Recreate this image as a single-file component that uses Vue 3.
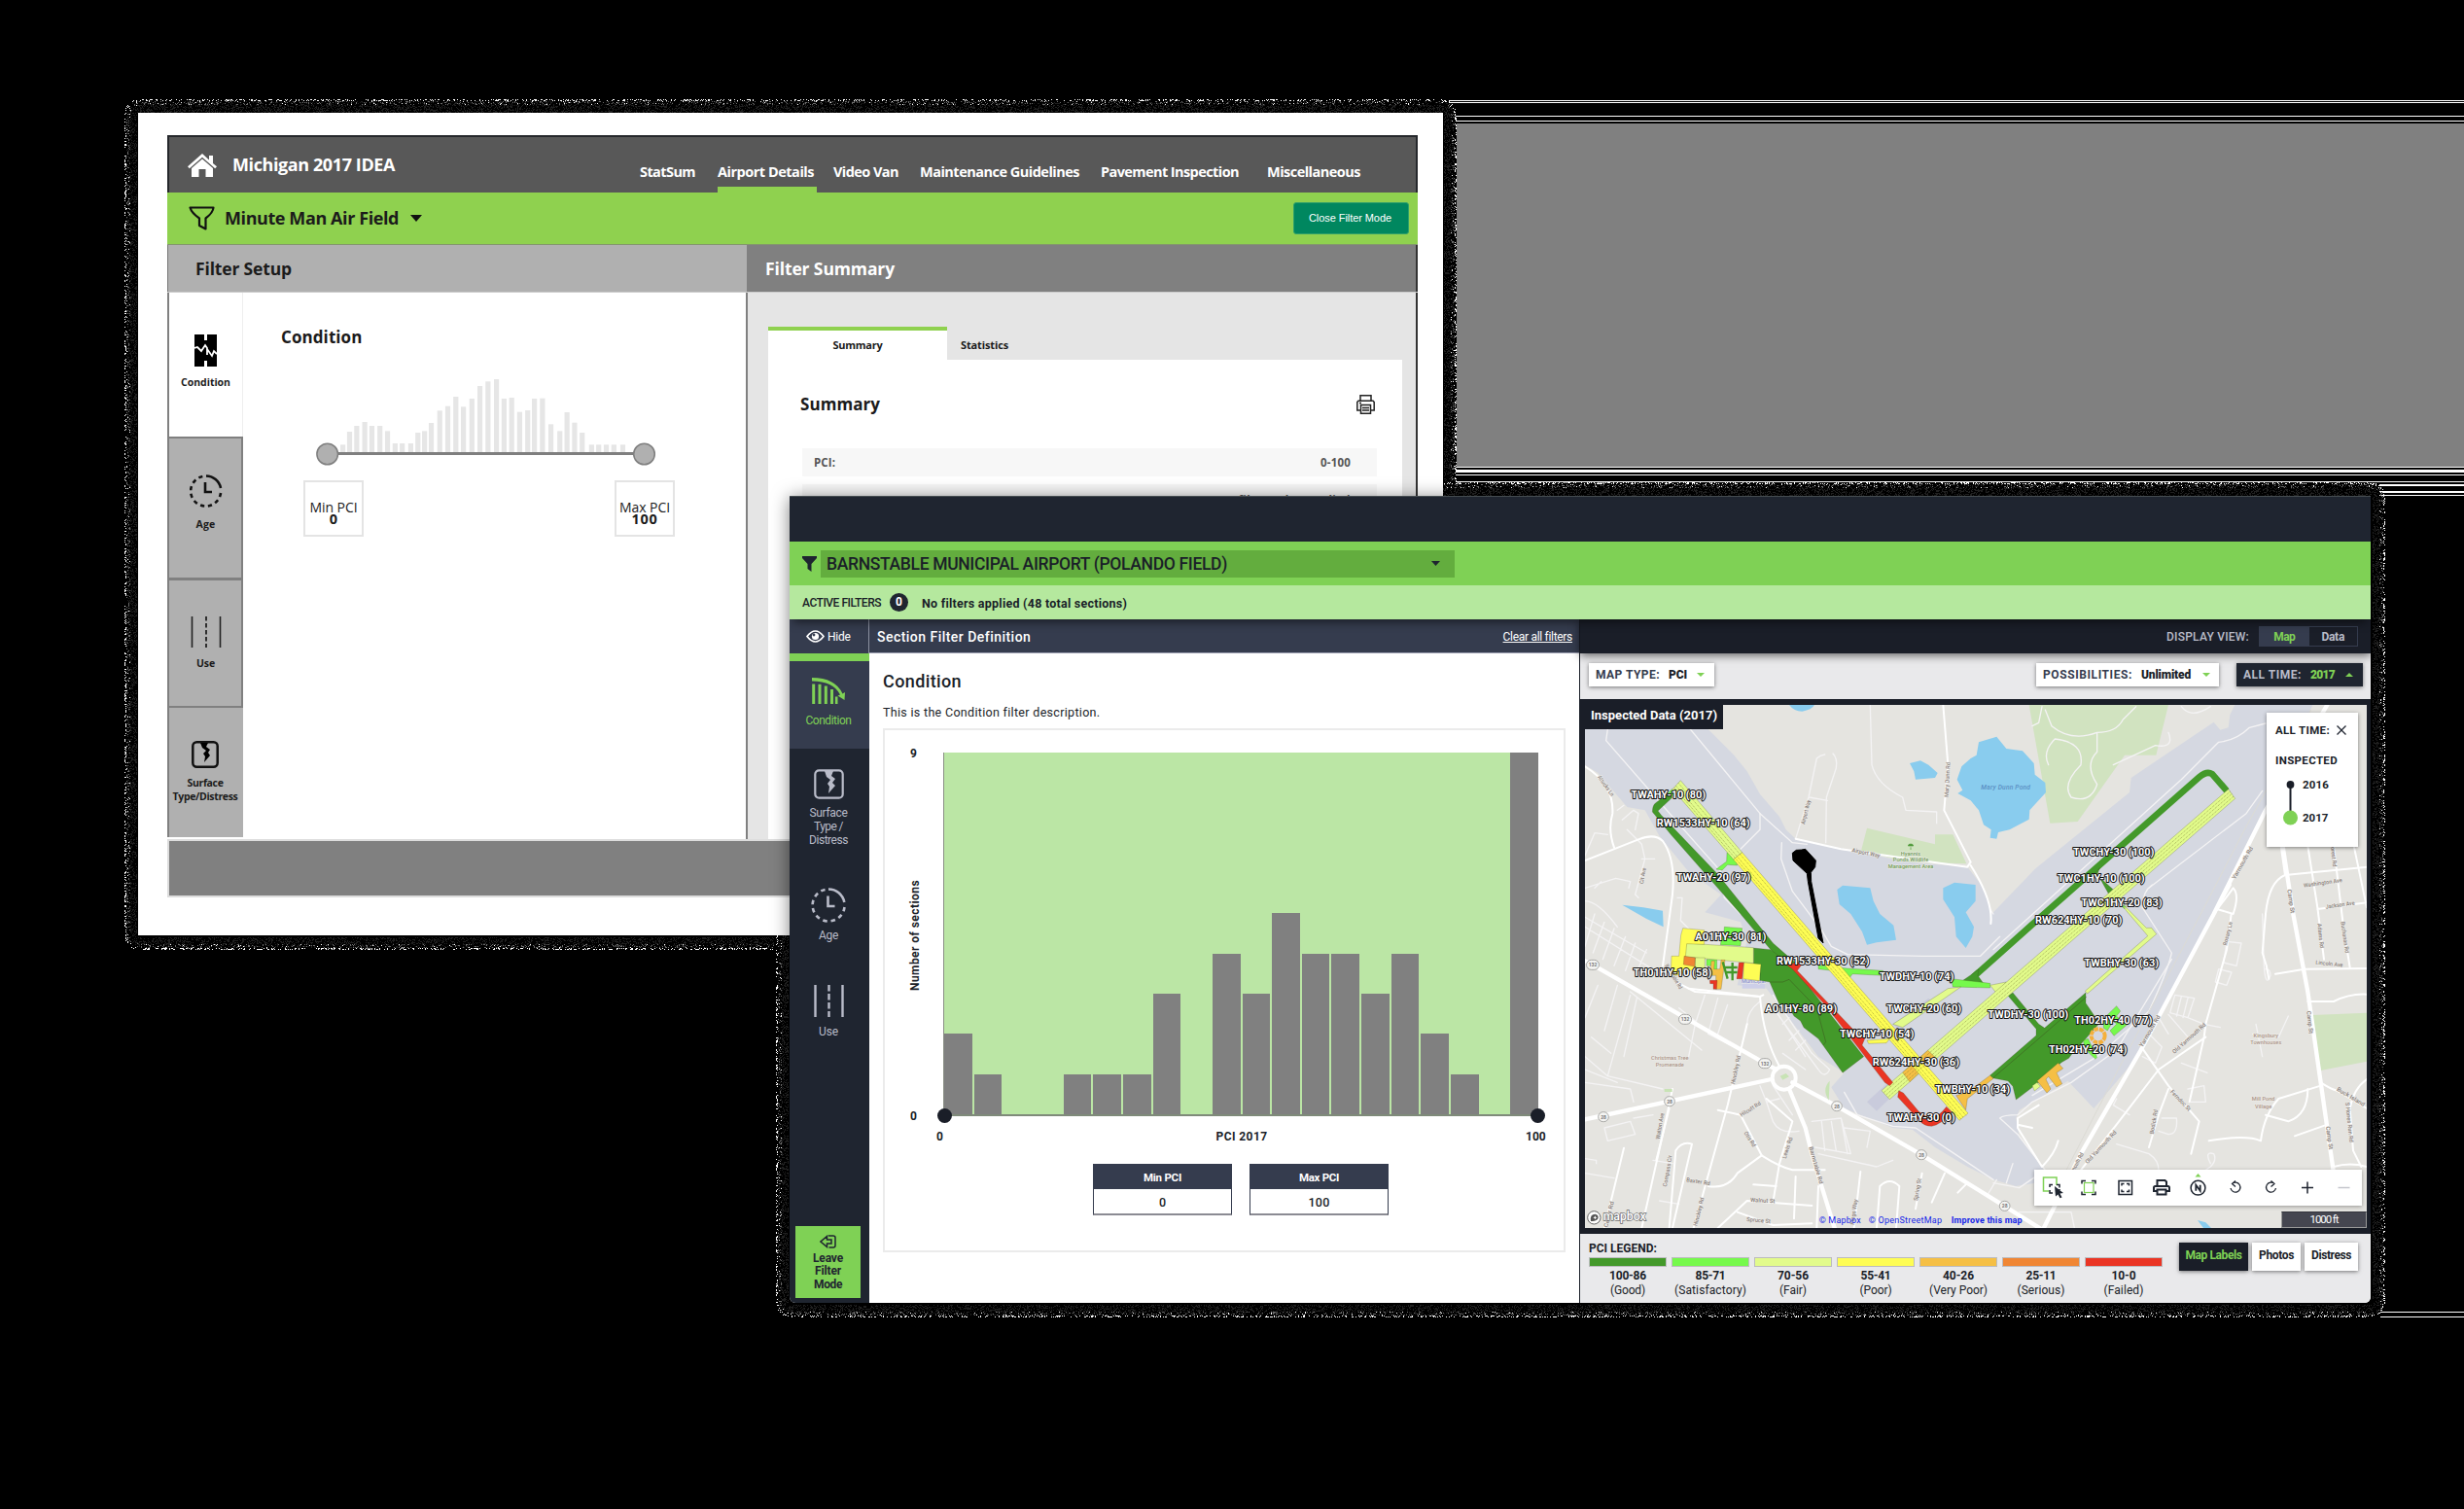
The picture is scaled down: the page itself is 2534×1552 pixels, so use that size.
<script setup>
// Spreads a text's letters so that it fills the given length in pixels.
const vFit = {
  mounted(el, { value, modifiers }) {
    const side = modifiers.tall ? 'height' : 'width'
    const n = el.textContent.trim().length
    el.style.letterSpacing = '0px'
    const natural = el.getBoundingClientRect()[side]
    el.style.letterSpacing = ((value - natural) / n).toFixed(3) + 'px'
  },
}

// Speckled shadow edge round each window
let seed = 7
function rnd() {
  seed = (seed * 1103515245 + 12345) % 2147483648
  return seed / 2147483648
}
const specks = ['', '', '']
function ring(l, t, r, b, size, skip) {
  const radius = 14
  for (let y = t; y < b; y++) {
    for (let x = l; x < r; x++) {
      if (x === l + size && y > t + size && y < b - size) x = r - size
      const dx = Math.max(l + radius - x, x - (r - 1 - radius), 0)
      const dy = Math.max(t + radius - y, y - (b - 1 - radius), 0)
      const depth = dx && dy ? radius - Math.hypot(dx, dy) : radius - Math.max(dx, dy)
      if (depth < 0 || depth > size || skip(x, y)) continue
      const k = rnd()
      const q = rnd()
      if (depth < 2) {
        if (k < 0.28) specks[0] += `M${x} ${y}h1v1h-1z`
      } else if (depth < 6) {
        if (k < 0.3) specks[q < 0.08 ? 0 : q < 0.5 ? 1 : 2] += `M${x} ${y}h1v1h-1z`
      } else if (k < 0.32) specks[2] += `M${x} ${y}h1v1h-1z`
    }
  }
}
const inFront = (x, y) => x >= 796 && y >= 496
ring(128, 102, 1498, 977, 13, inFront)
ring(798, 496, 2453, 1355, 13, (x, y) => x < 1484 && y < 962)

const nav = [
  { t: 'StatSum', w: 57, m: 0 },
  { t: 'Airport Details', w: 99, m: 23, on: true },
  { t: 'Video Van', w: 67, m: 17 },
  { t: 'Maintenance Guidelines', w: 164, m: 22 },
  { t: 'Pavement Inspection', w: 142, m: 22 },
  { t: 'Miscellaneous', w: 96, m: 29 },
]
const miniBars = [
  [501, 1102], [516, 1062], [532, 1044], [550, 1032], [566, 1044], [584, 1044], [601, 1060], [618, 1098],
  [634, 1098], [653, 1098], [669, 1065], [684, 1060], [699, 1035], [718, 997], [736, 983], [754, 954],
  [771, 985], [790, 960], [808, 921], [826, 907], [845, 900], [862, 960], [879, 957], [897, 1001],
  [915, 996], [930, 960], [948, 959], [967, 1039], [987, 1060], [1003, 1002], [1020, 1034], [1037, 1065],
  [1058, 1102], [1074, 1102], [1091, 1102], [1108, 1102], [1128, 1102],
].map(([x, y]) => ({ x: x / 2.178 - 130, y: y / 3 - 211, h: (1126 - y) / 3 }))

const counts = [2, 1, 0, 0, 1, 1, 1, 3, 0, 4, 3, 5, 4, 4, 3, 4, 2, 1, 0, 9]

const legend = [
  { r: '100-86', n: '(Good)', c: '#43992a', rw: 38, nw: 36 },
  { r: '85-71', n: '(Satisfactory)', c: '#76f94c', rw: 31, nw: 74 },
  { r: '70-56', n: '(Fair)', c: '#e2fb8b', rw: 32, nw: 28 },
  { r: '55-41', n: '(Poor)', c: '#fefd54', rw: 31, nw: 33 },
  { r: '40-26', n: '(Very Poor)', c: '#f5bf45', rw: 32, nw: 60 },
  { r: '25-11', n: '(Serious)', c: '#f08634', rw: 31, nw: 49 },
  { r: '10-0', n: '(Failed)', c: '#ea3524', rw: 25, nw: 41 },
]

const sections = [
  { t: 'TWAHY-10 (80)', x: 202, y: 603, w: 230 },
  { t: 'RW1533HY-10 (64)', x: 281, y: 690, w: 288 },
  { t: 'TWAHY-20 (97)', x: 342, y: 857, w: 229 },
  { t: 'TWCHY-30 (100)', x: 1566, y: 779, w: 250 },
  { t: 'TWC1HY-10 (100)', x: 1518, y: 862, w: 269 },
  { t: 'TWC1HY-20 (83)', x: 1591, y: 936, w: 250 },
  { t: 'RW624HY-10 (70)', x: 1449, y: 990, w: 268 },
  { t: 'A01HY-30 (81)', x: 400, y: 1040, w: 219 },
  { t: 'RW1533HY-30 (52)', x: 651, y: 1115, w: 287 },
  { t: 'TH01HY-10 (58)', x: 209, y: 1152, w: 242 },
  { t: 'TWDHY-10 (74)', x: 968, y: 1164, w: 230 },
  { t: 'TWBHY-30 (63)', x: 1600, y: 1123, w: 230 },
  { t: 'A01HY-80 (89)', x: 616, y: 1262, w: 221 },
  { t: 'TWCHY-20 (60)', x: 991, y: 1262, w: 230 },
  { t: 'TWDHY-30 (100)', x: 1303, y: 1280, w: 248 },
  { t: 'TH02HY-40 (77)', x: 1570, y: 1300, w: 240 },
  { t: 'TWCHY-10 (54)', x: 846, y: 1342, w: 229 },
  { t: 'TH02HY-20 (74)', x: 1491, y: 1389, w: 241 },
  { t: 'RW624HY-30 (36)', x: 947, y: 1429, w: 268 },
  { t: 'TWBHY-10 (34)', x: 1141, y: 1513, w: 230 },
  { t: 'TWAHY-30 (0)', x: 992, y: 1599, w: 210 },
]
const streets = [
  { t: 'Attucks Ln', x: 98, y: 538, a: 54, w: 74 },
  { t: 'Airport Way', x: 738, y: 684, a: -76, w: 76 },
  { t: 'Mary Dunn Rd', x: 1181, y: 600, a: -87, w: 108 },
  { t: 'Airport Way', x: 883, y: 768, a: 12, w: 88 },
  { t: 'Cit Ave', x: 240, y: 868, a: -80, w: 50 },
  { t: 'Yarmouth Rd', x: 2066, y: 854, a: -60, w: 112 },
  { t: 'Forest Rd', x: 2360, y: 745, a: 84, w: 70 },
  { t: 'Washington Ave', x: 2278, y: 878, a: -8, w: 120 },
  { t: 'Jackson Ave', x: 2346, y: 944, a: -8, w: 90 },
  { t: 'Camp St', x: 2227, y: 885, a: 82, w: 74 },
  { t: 'Rosary Ln', x: 2040, y: 1058, a: -76, w: 74 },
  { t: 'Adams Rd', x: 2320, y: 990, a: 84, w: 76 },
  { t: 'Buchanan Rd', x: 2392, y: 984, a: 82, w: 98 },
  { t: 'Lincoln Ave', x: 2314, y: 1115, a: 6, w: 84 },
  { t: 'Camp St', x: 2287, y: 1260, a: 84, w: 70 },
  { t: 'Yarmouth Rd', x: 1780, y: 1372, a: -60, w: 110 },
  { t: 'Old Yarmouth Rd', x: 1879, y: 1392, a: -42, w: 132 },
  { t: 'Ferndoc St', x: 1865, y: 1510, a: 46, w: 82 },
  { t: 'Bodick Rd', x: 1814, y: 1640, a: -80, w: 76 },
  { t: 'Old Yarmouth Rd', x: 1611, y: 1732, a: -47, w: 132 },
  { t: 'Yarmouth Rd', x: 1560, y: 1775, a: -62, w: 84 },
  { t: 'Buck Island', x: 2378, y: 1504, a: 31, w: 98 },
  { t: 'S Hones Run Rd', x: 2406, y: 1542, a: 84, w: 124 },
  { t: 'Camp St', x: 2346, y: 1616, a: 82, w: 72 },
  { t: 'Barnstable Rd', x: 306, y: 1120, a: 58, w: 86 },
  { t: 'Hinckley Rd', x: 522, y: 1486, a: -78, w: 90 },
  { t: 'Walton Ave', x: 290, y: 1656, a: -80, w: 82 },
  { t: 'Compass Cir', x: 312, y: 1802, a: -80, w: 98 },
  { t: 'Hilcutt Rd', x: 543, y: 1586, a: -32, w: 72 },
  { t: 'Otis Rd', x: 550, y: 1636, a: 58, w: 52 },
  { t: 'Lewis Rd', x: 680, y: 1716, a: -72, w: 68 },
  { t: 'Barnstable Rd', x: 751, y: 1680, a: 74, w: 118 },
  { t: 'Baxter Rd', x: 372, y: 1786, a: 9, w: 74 },
  { t: 'Walnut St', x: 570, y: 1848, a: 3, w: 76 },
  { t: 'Spruce St', x: 558, y: 1908, a: 5, w: 74 },
  { t: 'Hinckley Rd', x: 406, y: 1924, a: -76, w: 90 },
  { t: 'Spring St', x: 1086, y: 1846, a: -80, w: 70 },
  { t: 'Kings Way', x: 890, y: 1920, a: -82, w: 80 },
  { t: 'Cedar Rd', x: 130, y: 1928, a: -76, w: 82 },
]
const shields = [
  { x: 84, y: 1117, t: '132' }, { x: 369, y: 1285, t: '132' }, { x: 615, y: 1421, t: '132' },
  { x: 321, y: 1538, t: '28' }, { x: 117, y: 1586, t: '28' }, { x: 837, y: 1553, t: '28' },
  { x: 1098, y: 1703, t: '28' }, { x: 1355, y: 1861, t: '28' },
]
const roads = {
  wide: [
    'M60 1105 L84 1117 L615 1421 L650 1440', 'M700 1480 L837 1553 L1098 1703 L1320 1840 L1480 1940',
    'M60 1594 L321 1538 L635 1470', 'M690 1500 L740 1620 L760 1700 L790 1800 L830 1929',
    'M2350 315 L2160 640 L2000 960 L1775 1380 L1590 1700 L1470 1940',
    'M2205 700 L2245 960 L2290 1200 L2330 1480 L2370 1760',
  ],
  mid: [
    'M60 795 L225 730 Q275 710 300 735 Q340 790 330 900 L300 1120', 'M1165 315 L1180 500 L1168 640 L1250 800 L1240 815 L1060 790 L850 760 L710 728',
    'M1250 810 Q1320 920 1312 990', 'M60 505 Q150 560 145 650 Q130 700 150 755', 'M380 1190 L600 1215 L610 1210',
    'M340 1170 L400 1200 L600 1215 Q610 1340 660 1430', 'M280 1720 L320 1560', 'M180 1682 L120 1929', 'M235 1929 L300 1640 L330 1500',
    'M320 1929 L340 1690 Q360 1660 390 1670 L330 1929', 'M395 1929 L500 1550 L560 1300', 'M440 1800 Q500 1810 530 1760 L605 1705 L540 1580 L470 1565',
    'M605 1705 Q660 1740 700 1750 L800 1750', 'M640 1850 L660 1730 L700 1600 L620 1530', 'M470 1929 L560 1845 L760 1860', 'M530 1880 L640 1920 L760 1915', 'M580 1795 L650 1800 M710 1770 L705 1900 M775 1929 L780 1800',
    'M890 1929 L910 1755', 'M960 1929 L970 1800 Q1000 1770 1030 1800 L1020 1929', 'M1080 1870 L1100 1760 M1130 1850 L1170 1760 M1210 1820 L1240 1790',
    'M2054 960 L2040 1070 L1975 1300 L1970 1340 L1925 1540', 'M1975 1340 L1830 1440 L1700 1610 L1590 1750', 'M1780 1375 L1860 1490 L1955 1600 L1930 1700', 'M1860 1500 L1830 1580 L1800 1680',
    'M2190 1145 L2280 1130 L2472 1128', 'M2290 1230 L2370 1230 Q2420 1205 2472 1208', 'M2330 1480 Q2360 1500 2380 1505 L2472 1560', 'M2370 1740 Q2420 1725 2472 1740', 'M2200 700 L2220 840 L2472 815 M2220 840 Q2170 860 2160 960 L2150 1080 Q2165 1120 2170 1160',
    'M2290 750 L2320 940 L2340 1100 M2370 750 L2400 1000 L2420 1125 M2320 945 L2472 925 M2430 740 L2472 940', 'M2000 960 L2060 880 Q2080 900 2060 960 L2010 945', 'M2010 945 L2052 870', 'M2472 1470 Q2430 1500 2420 1560 L2430 1690 L2455 1740',
    'M1985 1660 Q2100 1640 2145 1660 Q2155 1580 2200 1530 L2330 1490', 'M2160 1580 L2230 1600 Q2290 1580 2290 1500', 'M2250 1645 L2350 1610',
    'M1395 1590 L1460 1550 M1395 1590 L1395 1620 L1470 1740 M1395 1610 L1440 1620 M1470 1740 Q1510 1700 1520 1660',
  ],
  thin: [
    'M130 390 L125 425 L330 660 L480 830 L490 910 L540 960', 'M385 390 L600 650 L600 700 L540 760', 'M600 650 L700 740 L745 745', 'M667 740 L665 790 L700 890 L790 1010 L820 1060 L870 1085 L1100 1090 L1280 1090 L1340 1030', 'M710 728 L750 600 L775 480 Q785 470 800 468 M825 465 Q840 480 835 510 L805 600 L803 740 M752 600 L808 610',
    'M940 315 L945 500 Q960 560 1040 600 L1050 640 L1145 645 L1145 680', 'M1320 1070 L1900 545 L2015 430 Q2070 425 2110 385 L2160 372', 'M1310 945 L1320 960', 'M1810 870 Q1780 890 1780 940 L1870 1080 Q1860 1130 1800 1260 L1640 1400 L1440 1520', 'M1800 880 L2100 650 L2150 580',
    'M190 700 L235 745 L245 790 L215 900 L225 910 M235 790 L275 790 M60 780 L90 710 M90 710 L130 715 M160 640 L180 625 M175 670 L210 640 L225 650 L215 700 M60 880 L155 850 L200 860 L195 880 M90 880 L110 860 M60 920 Q100 920 160 1000 M60 970 L250 1080 M345 910 L360 910 L355 980 L385 1010',
    'M60 1000 L300 1150 M90 960 L60 1060 M120 985 L85 1080 M150 1005 L115 1100 M185 1030 L150 1120 M215 1050 L185 1135 M250 1070 L215 1150 M100 1180 L60 1280 M160 1180 L120 1320 M200 1210 L130 1460 M200 1200 L420 1380 M220 1220 L180 1400 M60 1400 L130 1460 L300 1500 M80 1340 L140 1390 M60 1480 L200 1500 L210 1540 M60 1440 L160 1480',
    'M430 1210 L400 1300 L380 1400 M470 1220 L440 1330 M500 1240 L470 1330 M440 1330 L540 1380 M400 1290 L350 1250 M120 1620 L200 1600 L215 1640 L130 1660 Z M210 1590 L270 1580 M60 1715 L95 1720 L95 1730 M60 1760 L150 1775 M270 1720 L330 1730 M290 1845 L350 1855',
    'M600 1230 Q560 1260 560 1300 M640 1210 L760 1390 L815 1440 Q800 1470 780 1440 L640 1250 M650 1260 L740 1400 M690 1280 L670 1300 M720 1320 L690 1350 M740 1350 L710 1380 M670 1390 L740 1440 M600 1490 L620 1540 L640 1600 Q660 1640 720 1630 M640 1490 L700 1580 M620 1540 L660 1530 M760 1600 L850 1590 L880 1700 L770 1680 M790 1600 L800 1690 M820 1600 L835 1690 M850 1590 L870 1700 M860 1620 L940 1630 L930 1680 M780 1700 L960 1740 L1010 1720',
    'M860 1510 L900 1580 L1010 1615 L1080 1620 L1200 1700 L1320 1780 M1320 1790 L1400 1805 L1480 1750 L1395 1640 L1340 1590 Q1350 1580 1395 1580 L1440 1540 L1560 1480 L1700 1380 L1870 1100',
    'M2040 1045 L2085 1050 L2070 1120 L2030 1110 Z M2015 1130 L2055 1140 L2040 1180 L2005 1170 Z M1880 1210 L1940 1220 L1920 1280 L1865 1265 Z M1860 1270 L1920 1340 L1880 1380 M1830 1280 L1860 1330 M1900 1215 L1885 1275 M1920 1220 L1905 1280 M1800 1330 L1840 1370 L1820 1420 L1780 1400 M1920 1280 L1970 1300 L2020 1310',
    'M1380 1730 L1360 1790 M1300 1830 L1330 1780 M1400 1880 L1560 1880 L1570 1929 M1700 1530 L1690 1550 L1740 1580 M1840 1590 L1885 1590 Q1890 1640 1860 1640 L1830 1630 M1920 1500 L1970 1490 L1975 1540 L1930 1540 M1700 1670 L1800 1700 Q1830 1720 1830 1750 M2120 1330 L2200 1340 L2230 1275 M2130 1300 L2150 1400 M1900 1420 L1980 1450 M2150 960 L2155 1120 Q2160 1190 2175 1150 Q2175 1130 2160 1130 M1990 1730 Q1970 1690 2000 1700 Q2010 1720 1990 1740 L1960 1760',
    'M1440 380 L1460 370 L1470 320 M1640 400 Q1560 430 1500 380 L1480 330 M1640 400 Q1700 400 1720 360 L1760 320 M1640 400 L1640 460 Q1600 500 1640 560 Q1620 620 1560 600 Q1530 560 1590 500 Q1600 430 1510 420 Q1470 460 1490 500 M1860 400 Q1880 450 1820 440 L1690 500 M1900 320 Q1930 360 1990 320',
  ],
}
</script>

<template>
  <div class="stage">
    <div class="streak" />
    <div class="rules top"><i /><i /><i /><i /></div>
    <div class="rules low"><i /><i /><i /><i /></div>
    <div class="rules mid"><i /><i /><i /></div>
    <div class="rules foot"><i /><i /></div>

    <!-- Earlier design -->
    <section class="old">
      <div class="app">
        <header class="bar">
          <svg class="home" viewBox="0 0 30 24"><path d="M15 0 L22 6.500V2h4v8l4 3.300-1.800 2L15 3.700 1.800 15.300 0 13.300z M15 5.500 L26 15v9h-7.500v-8h-7v8H4v-9z" fill="#fff" /></svg>
          <span class="brand"><span v-fit="167">Michigan 2017 IDEA</span></span>
          <nav>
            <span v-for="n in nav" :key="n.t" class="item" :class="{ on: n.on }" :style="{ marginLeft: n.m + 'px' }"><span v-fit="n.w">{{ n.t }}</span></span>
          </nav>
        </header>
        <div class="field">
          <svg class="funnel" viewBox="0 0 27 25"><path d="M1.500 1.500H25.500Q25 7 17.500 12.500V23.500L11 20V12.500Q3 7 1.500 1.500z" fill="none" stroke="#111" stroke-width="2.200" stroke-linejoin="round" /></svg>
          <span class="fname"><span v-fit="179">Minute Man Air Field</span></span>
          <svg width="12" height="7" viewBox="0 0 12 7"><path d="M0 0h12L6 7z" fill="#111" /></svg>
          <button class="close"><span v-fit="85">Close Filter Mode</span></button>
        </div>
        <div class="heads">
          <div class="h1"><span v-fit="99">Filter Setup</span></div>
          <div class="h2"><span v-fit="133">Filter Summary</span></div>
        </div>
        <div class="cols">
          <aside>
            <div class="tab t1">
              <svg width="23" height="33" viewBox="0 0 23 33"><path d="M0 0h10v6h3V0h10v33H13v-6h-3v6H0z" /><path d="M0 14l3-1 4 4 4-6 2 3v7l0-6 5 7 2-5 3 3" fill="none" stroke="#fff" stroke-width="1.800" /></svg>
              <span v-fit="51">Condition</span>
            </div>
            <div class="tab t2">
              <svg width="34" height="34" viewBox="0 0 34 34"><path d="M17 1.500A15.500 15.500 0 0 1 32 14" class="ln" /><path d="M32 19A15.500 15.500 0 1 1 14 1.800" class="ln" stroke-dasharray="4.200 3.700" /><path d="M16 8v10h7" class="ln" /></svg>
              <span v-fit="20">Age</span>
            </div>
            <div class="tab t3">
              <svg width="32" height="34" viewBox="0 0 32 34"><path d="M1.500 1v32M30.500 1v32" stroke="#222" stroke-width="1.600" /><path d="M16 1v32" stroke="#222" stroke-width="1.800" stroke-dasharray="4.500 2.500" /></svg>
              <span v-fit="19">Use</span>
            </div>
            <div class="tab t4">
              <svg width="28" height="28" viewBox="0 0 28 28"><rect x="1.300" y="1.300" width="25.400" height="25.400" rx="4" fill="none" stroke="#111" stroke-width="2.500" /><path d="M9 2h8l-2 4 4 3-2 3 2 3-6 7 1-6-2-3 3-3-4-3z" /></svg>
              <span v-fit="37">Surface</span>
              <span v-fit="67">Type/Distress</span>
            </div>
          </aside>
          <main>
            <h3><span v-fit="83.5">Condition</span></h3>
            <svg class="spark" width="517" height="92" viewBox="0 88 517 92">
              <rect v-for="(b, i) in miniBars" :key="i" :x="b.x" :y="b.y" width="5.200" :height="b.h" fill="#e6e6e6" />
              <path d="M98 165.500h304" stroke="#7f7f7f" stroke-width="3" />
              <circle cx="86.700" cy="166" r="10.800" fill="#b0b0b0" stroke="#7f7f7f" stroke-width="1.500" />
              <circle cx="412.500" cy="166" r="10.800" fill="#b0b0b0" stroke="#7f7f7f" stroke-width="1.500" />
            </svg>
            <div class="limits">
              <div class="lim"><span v-fit="49">Min PCI</span><b>0</b></div>
              <div class="lim"><span v-fit="52">Max PCI</span><b v-fit="27">100</b></div>
            </div>
          </main>
          <div class="sum">
            <div class="tabs"><span class="a"><span v-fit="51">Summary</span></span><span class="b"><span v-fit="49">Statistics</span></span></div>
            <div class="sheet">
              <div class="title">
                <h3><span v-fit="82">Summary</span></h3>
                <svg width="21" height="20" viewBox="0 0 21 20" fill="none" stroke="#222" stroke-width="1.500"><path d="M5 6V.8h11V6M5 16H1.800V7.500L3 6.200h15l1.200 1.300V16H16M5.500 10.500h10v8.700h-10zM7 13.500h7M7 16h7M4 8.500h2" /></svg>
              </div>
              <div class="row"><span v-fit="22">PCI:</span><span v-fit="31">0-100</span></div>
              <div class="row second"><span v-fit="25">AGE:</span><span v-fit="136">No filter value applied</span></div>
            </div>
          </div>
        </div>
        <footer />
      </div>
    </section>

    <!-- Current design -->
    <section class="new">
      <div class="cap" />
      <div class="airport">
        <svg width="15" height="16" viewBox="0 0 15 16"><path d="M0 0h15v2L9.500 8v8l-4-3V8L0 2z" fill="#1f2530" /></svg>
        <div class="select"><span v-fit="412">BARNSTABLE MUNICIPAL AIRPORT (POLANDO FIELD)</span><svg width="9" height="5" viewBox="0 0 9 5"><path d="M0 0h9L4.500 5z" fill="#1f2530" /></svg></div>
      </div>
      <div class="active"><span class="lbl"><span v-fit="81">ACTIVE FILTERS</span></span><b class="badge">0</b><span class="msg"><span v-fit="211">No filters applied (48 total sections)</span></span></div>
      <div class="body">
        <aside class="side">
          <div class="hide">
            <svg width="19" height="13" viewBox="0 0 19 13"><path d="M1 6.500Q9.500-4.500 18 6.500Q9.500 17.500 1 6.500z" fill="none" stroke="#fff" stroke-width="1.700" /><circle cx="9.500" cy="6.500" r="3.600" fill="#fff" /><circle cx="8" cy="5" r="1.400" fill="#353c4e" /></svg>
            <span v-fit="23.5">Hide</span>
          </div>
          <div class="s s1">
            <svg width="34" height="27" viewBox="0 0 34 27"><path d="M0 0Q24 0 31.500 16.500l2.500-1.500-.5 8-7-4.500 2.500-1Q22 3.500 0 3.500z" fill="#7fd155" /><path d="M1.700 6.500V27M8 6.800V27M14.300 8.500V27M20.500 12V27" stroke="#7fd155" stroke-width="3" fill="none" /><path d="M25.200 19.500V27" stroke="#7fd155" stroke-width="2.600" /></svg>
            <span v-fit="47">Condition</span>
          </div>
          <div class="s s2">
            <svg width="31" height="31" viewBox="0 0 31 31"><rect x="1.300" y="1.300" width="28.400" height="28.400" rx="4" fill="none" stroke="#b9bcc9" stroke-width="2.200" /><path d="M11 2h9l-2 5 4 3-3 4 3 3-7 8 1-7-2-3 3-4-4-3z" fill="#b9bcc9" /></svg>
            <span v-fit="39">Surface</span><span v-fit="30">Type /</span><span v-fit="40">Distress</span>
          </div>
          <div class="s s3">
            <svg width="36" height="36" viewBox="0 0 36 36" fill="none" stroke="#b9bcc9" stroke-width="2.600"><path d="M18 1.500A16.500 16.500 0 0 1 34.300 15" /><path d="M34.500 20A16.500 16.500 0 1 1 15 1.800" stroke-dasharray="4.500 3.900" /><path d="M17.500 8.500v10.500h7" /></svg>
            <span v-fit="20">Age</span>
          </div>
          <div class="s s4">
            <svg width="31" height="33" viewBox="0 0 31 33" stroke="#b9bcc9" stroke-width="2.400"><path d="M1.500 0v33M29.500 0v33" /><path d="M15.500 0v33" stroke-dasharray="6.500 2.500" /></svg>
            <span v-fit="20">Use</span>
          </div>
          <div class="leave">
            <svg width="17" height="14" viewBox="0 0 17 14" fill="none" stroke="#1f2530" stroke-width="1.500"><path d="M9.500 1.500V1H14q2 0 2 2v8q0 2-2 2H9.500M12 5H7.500V1.500L1 7l6.500 5.500V9H12z" /></svg>
            <span v-fit="31">Leave</span><span v-fit="27">Filter</span><span v-fit="29">Mode</span>
          </div>
        </aside>
        <main class="def">
          <div class="dhead"><b v-fit="158">Section Filter Definition</b><span class="clear" v-fit="71">Clear all filters</span></div>
          <div class="pane">
            <h2><span v-fit="81">Condition</span></h2>
            <p><span v-fit="223">This is the Condition filter description.</span></p>
            <div class="card">
              <div class="chart">
                <div class="ylab"><b>9</b><span class="vert"><span v-fit.tall="114">Number of sections</span></span><b>0</b></div>
                <div class="plot">
                  <i v-for="(c, i) in counts" :key="i" :style="{ height: c * 41.33 + 'px' }" />
                  <u class="dot l" /><u class="dot r" />
                </div>
              </div>
              <div class="xlab"><b>0</b><b v-fit="53">PCI 2017</b><b v-fit="22">100</b></div>
              <div class="boxes">
                <div><b v-fit="39">Min PCI</b><span>0</span></div>
                <div><b v-fit="41">Max PCI</b><span v-fit="22">100</span></div>
              </div>
            </div>
          </div>
        </main>
        <div class="right">
          <div class="view"><span v-fit="85">DISPLAY VIEW:</span><div class="seg"><b class="on"><span v-fit="22">Map</span></b><b><span v-fit="23.5">Data</span></b></div></div>
          <div class="tools">
            <div class="dd w1"><span v-fit="66">MAP TYPE:</span><b v-fit="19">PCI</b><i /></div>
            <div class="dd w2"><span v-fit="92">POSSIBILITIES:</span><b v-fit="51">Unlimited</b><i /></div>
            <div class="dd w3"><span v-fit="60">ALL TIME:</span><b v-fit="25">2017</b><i /></div>
          </div>
          <div class="mapbox">
            <svg class="map" width="804" height="538" viewBox="60 315 2412 1614">
              <rect x="60" y="315" width="2412" height="1614" fill="#e5e4e0" />
              <g fill="#d1e3c0">
                <path d="M930 695L1140 745V715H1195L1237 805L1060 800L912 765z" />
                <path d="M1430 315H1860L1822 470H1725L1580 675L1495 680z" />
                <path d="M2305 1272L2472 1265V1415L2330 1443z" />
              </g>
              <path fill="#d5d8e1" d="M60 390H440L520 470L560 520L600 590L660 660L680 700L710 728L840 755L1060 800L1240 815L1290 880L1315 960L1450 820L1740 585L1745 540L2000 368L2020 392L2045 385L2050 345L2065 315H2305L2160 640L1995 960L1830 1280L1740 1430L1630 1560L1550 1475L1400 1565L1390 1590L1400 1650L1470 1740L1480 1760L1450 1790L1390 1800L1320 1780L1240 1740L1140 1680L1070 1625L1010 1620L860 1560L820 1495L860 1450L780 1400L620 1190L530 1180L560 1040L540 985L430 955L480 900L380 830L290 720L245 640L190 630L100 525L60 500z" />
              <path d="M930 1540L960 1568L1020 1510L990 1485zM1010 1300L1120 1220L1140 1240L1030 1320z" fill="#c9cbdc" />
              <path d="M545 1160h70v30h-70z" fill="#cdcfe8" />
              <g fill="#89ccee">
                <path d="M1275 430L1330 413L1360 450L1410 457L1445 495L1448 530L1480 555L1482 585L1432 640L1430 668L1370 700L1335 708L1330 728L1310 725L1313 700L1290 685L1275 640L1250 610L1210 588L1225 578L1208 545L1222 505L1250 480L1268 470z" />
                <path d="M1062 495L1095 487L1120 500L1148 525L1140 540L1080 545L1075 520z" />
                <path d="M690 315H768Q760 330 730 335Q705 335 690 315z" />
                <path d="M838 885L855 872L940 880L950 920L970 960L1012 995L1020 1040L960 1048L930 1055L915 1015L880 960L845 930z" />
                <path d="M1165 880L1200 863L1265 870V920L1235 955L1260 1000L1255 1030L1235 1065L1205 1030L1200 970L1165 915z" />
                <path d="M175 932L240 940L300 950L302 1000L250 975z" />
                <path d="M1950 1905L1975 1912L1992 1929H1968z" />
              </g>
              <g fill="none" stroke="#fff" stroke-linejoin="round" stroke-linecap="round">
                <path v-for="d in roads.thin" :key="d" :d="d" stroke="#f4f3f4" stroke-width="4" />
                <path v-for="d in roads.mid" :key="d" :d="d" stroke-width="6" />
                <path v-for="d in roads.wide" :key="d" :d="d" stroke-width="13" />
                <circle cx="674" cy="1466" r="36" stroke-width="12" />
              </g>
              <path d="M2300 330L2100 690L1960 960L1700 1450L1540 1760" stroke="#dcdbd5" stroke-width="3" fill="none" />
              <path d="M662 1460L680 1452L690 1462L670 1472zM305 1500h24v9h-24zM815 1475Q790 1500 812 1535" fill="#c8e3b5" />
              <g fill="#89807c" class="st">
                <text v-for="(s, i) in streets" :key="i" :transform="`translate(${s.x} ${s.y}) rotate(${s.a})`" :textLength="s.w" lengthAdjust="spacingAndGlyphs">{{ s.t }}</text>
              </g>
              <g class="st mid" fill="#ab9488">
                <text x="322" y="1411">Christmas Tree</text><text x="322" y="1430">Promenade</text>
                <text x="2161" y="1340">Kingsbury</text><text x="2161" y="1363">Townhouses</text>
                <text x="2153" y="1535">Mill Pond</text><text x="2153" y="1559">Village</text>
                <g fill="#6e9a55"><text x="1065" y="780">Hyannis</text><text x="1065" y="799">Ponds Wildlife</text><text x="1065" y="818">Management Area</text></g>
                <text x="1358" y="577" fill="#5b90c4" font-style="italic" textLength="152">Mary Dunn Pond</text>
                <text x="580" y="1172" fill="#8890d0">Municipal</text>
              </g>
              <path d="M1065 762v-8M1057 750a8 6 0 1 1 16 0z" stroke="#4f9a3a" stroke-width="2" fill="#4f9a3a" />
              <g class="sh">
                <g v-for="s in shields" :key="s.x"><rect :x="s.x - 9 - s.t.length * 3.500" :y="s.y - 15" :width="18 + s.t.length * 7" height="30" rx="15" fill="#f4f4f2" stroke="#9a9a98" stroke-width="2.500" /><text :x="s.x" :y="s.y + 6">{{ s.t }}</text></g>
              </g>
              <path d="M728 762L740 760L772 795L770 815L757 832L758 860L795 1050L780 1035L748 860L745 835L702 795L700 772L712 763z" fill="#000" stroke="#000" stroke-width="3" stroke-linejoin="round" />
              <!-- Pavement sections -->
              <path d="M1258 1155L1440 992L1955 538Q1978 518 1995 528L2040 580" fill="none" stroke="#43992a" stroke-width="20" />
              <g stroke="#3a3a1a" stroke-opacity=".45" stroke-width="1.500">
                <g fill="#43992a">
                  <path d="M315 588L330 600L285 642L295 655L470 838L640 1050L720 1120L700 1150L540 960L325 715L268 645Q268 628 275 620z" />
                  <path d="M580 1065L632 1070L700 1120L920 1400L855 1450L780 1345L735 1310L725 1290L705 1275L685 1240L660 1240L630 1170L600 1165V1125H580z" />
                  <path d="M1275 1130L1272 1150L1290 1175L1222 1168L1255 1145z" />
                  <path d="M1648 818L1640 840L1690 885L1675 897L1650 852L1625 843z" />
                  <path d="M1380 1203L1460 1300L1478 1312L1605 1203V1235L1632 1275L1645 1300L1560 1395L1553 1405L1530 1418L1460 1480L1390 1533L1380 1492L1365 1475L1310 1465V1458L1452 1335V1315L1365 1212z" />
                </g>
                <path d="M630 1170H670L690 1162L775 1250L803 1355L795 1365M1320 1465L1460 1345L1608 1215" fill="none" stroke-opacity=".7" />
                <g fill="#76f94c">
                  <path d="M498 770L525 795L530 810L500 808L483 825L465 822L497 798z" />
                  <path d="M315 588L328 575L340 585L328 598z" />
                  <path d="M490 1000L545 1004L540 1058L478 1055L482 1030L488 1028z" />
                  <path d="M780 1118L870 1128L980 1135V1150L885 1145L878 1155L855 1138L780 1130z" />
                  <path d="M1190 1160L1310 1174V1188L1195 1185z" />
                  <path d="M435 1100h32v40h-12v-20h-20z" />
                  <path d="M1660 1283L1700 1244L1712 1260L1700 1275L1715 1290L1735 1300L1692 1336L1680 1320L1700 1300L1690 1290L1672 1320L1660 1312z" />
                  <path d="M1598 1350L1612 1345L1640 1402L1635 1408L1600 1375z" />
                  <path d="M1722 932l8 6-5 6-7-5z" />
                </g>
                <g fill="#e2fb8b">
                  <path d="M330 575L355 548L545 770L518 792z" />
                  <path d="M372 1050L580 1064V1112L368 1092z" />
                  <path d="M1720 935L1733 943L1792 1003H1808L1823 1022L1610 1206L1603 1198L1796 1028L1790 1020L1730 950z" />
                  <path d="M1180 1190L1220 1185L1040 1310L1010 1300z" />
                  <path d="M1310 1180L1360 1170L1330 1205z" />
                  <path d="M2045 575L2066 604L1000 1532L975 1505z" />
                  <path d="M400 1095h30v34h-30zM1440 1490l15-10 10 12-18 14z" />
                </g>
                <g fill="#f5bf45">
                  <path d="M1040 1449L1118 1381L1140 1402L1062 1478z" />
                  <path d="M1205 1520L1240 1510L1310 1458L1320 1468L1240 1530L1235 1565z" />
                  <path d="M480 1102H492L480 1192H464V1150H445L450 1105H460L458 1130H476z" />
                  <path d="M1455 1475L1520 1420L1535 1437L1515 1450L1532 1484L1515 1494L1490 1462L1482 1470L1497 1500L1485 1512z" />
                </g>
                <g fill="#fefd54">
                  <path d="M545 770L1242 1575L1215 1597L518 792z" />
                  <path d="M362 1004L428 1010V1054L374 1052L370 1095H400V1130L340 1150L325 1142L327 1090L350 1090L356 1025z" />
                  <path d="M550 1110L603 1115L598 1166L548 1160z" />
                  <path d="M930 1350L1000 1345L990 1358L935 1360z" />
                </g>
                <path d="M366 1090L400 1095L398 1122L364 1116z" fill="#f08634" />
                <g fill="#ea3524">
                  <path d="M535 1110H550L545 1160H528z" /><path d="M445 1165H468L466 1192H456V1175H446z" />
                  <path d="M680 1115L735 1108L715 1135L910 1340L925 1340L915 1365L1010 1480L1000 1490L985 1480L905 1375L800 1240L700 1130z" />
                  <path d="M1028 1505L1042 1512L1090 1570L1120 1590Q1150 1590 1175 1555L1190 1570Q1160 1610 1130 1615Q1105 1615 1090 1595L1025 1525z" />
                </g>
                <path d="M485 1108L500 1160M515 1110V1165M492 1125H530M492 1140H530" stroke="#43992a" stroke-opacity="1" stroke-width="7" fill="none" />
                <circle cx="1643" cy="1336" r="21" fill="none" stroke="#f5b03c" stroke-opacity="1" stroke-width="12" stroke-dasharray="14 3" />
              </g>
              <g fill="none" stroke="#6b6b28" stroke-width="1.600" stroke-dasharray="3 3">
                <path d="M348 556L1236 1582M340 564L1228 1589M335 570L1221 1594M2051 582L981 1512M2056 589L988 1519M2061 597L994 1526" />
              </g>
              <g class="sec">
                <text v-for="s in sections" :key="s.t" :x="s.x" :y="s.y" :textLength="s.w">{{ s.t }}</text>
              </g>
              <g class="logo"><circle cx="88" cy="1897" r="20" fill="#fff" stroke="#666" stroke-width="3" /><path d="M78 1908Q74 1886 92 1886Q104 1890 100 1900Q94 1910 78 1908z" fill="#555" /><path d="M91 1891l2 4 4 2-4 2-2 4-2-4-4-2 4-2z" fill="#fff" /><text x="116" y="1905" textLength="132">mapbox</text></g>
              <g class="attr"><text x="782" y="1913" textLength="129">© Mapbox</text><text x="935" y="1913" textLength="226">© OpenStreetMap</text><text x="1190" y="1913" textLength="219" font-weight="700">Improve this map</text></g>
            </svg>
            <div class="mlabel"><span v-fit="130">Inspected Data (2017)</span></div>
            <div class="time">
              <div class="r1"><b v-fit="56">ALL TIME:</b><svg width="10" height="10" viewBox="0 0 10 10"><path d="M.5.5l9 9M9.500.5l-9 9" stroke="#1f2530" stroke-width="1.300" /></svg></div>
              <b class="r2"><span v-fit="64">INSPECTED</span></b>
              <div class="steps">
                <svg width="15" height="46" viewBox="0 0 15 46"><path d="M7.500 4v30" stroke="#1a1e28" stroke-width="2" /><circle cx="7.500" cy="4" r="3.900" fill="#1a1e28" /><circle cx="7.500" cy="38" r="7.500" fill="#7fd155" /></svg>
                <div><b v-fit="27">2016</b><b v-fit="27">2017</b></div>
              </div>
            </div>
            <div class="toolbar">
              <svg width="337" height="37" viewBox="0 0 337 37" fill="none" stroke="#1f2530" stroke-width="1.500">
                <path d="M15 22H9.500V8H23v8" stroke="#7fd155" /><path d="M16 18v-2.500h3M23 15.500h3v3M16 21v3h3M26 20v1" /><path d="M21 17l9 7-3.500.5 2 4-2 .8-2-3.800-2.500 2z" fill="#1f2530" stroke="none" />
                <path d="M49 14.500v-3h4M59 11.500h4v3M49 22.500v3h4M59 25.500h4v-3" /><rect x="51.500" y="13.500" width="9.500" height="10" stroke="#7fd155" stroke-width="1.200" />
                <rect x="87" y="11.500" width="13.500" height="14" /><path d="M90 16.500v-2h2.500M95 14.500h2.500v2M90 20.500v2h2.500M95 22.500h2.500v-2" />
                <path d="M126.500 16v-5h8l1.500 1.500V16M126.500 22h-3.500v-3.500q0-1.500 1.500-1.500h13q1.500 0 1.500 1.500V22h-3.500M126.500 20.500h9v5h-9z" stroke-width="2" />
                <circle cx="168.500" cy="18.700" r="7.400" /><path d="M165.500 7.500l3-3.500 3 3.500z" fill="#7fd155" stroke="none" /><path d="M166.300 21.700v-6l4.400 6v-6" stroke-width="1.800" />
                <path d="M203.500 14.500a5 5 0 1 1-1.500 4.500M207 11.500l-3.500 3 3.500 3" stroke-width="1.300" /><path d="M247 14.500a5 5 0 1 0 1.500 4.500M243.500 11.500l3.500 3-3.500 3" stroke-width="1.300" />
                <path d="M275 18.500h12M281 12.500v12" /><path d="M312.500 18.500h12" stroke="#c4c6cc" />
              </svg>
            </div>
            <div class="scale"><span v-fit="29">1000 ft</span></div>
          </div>
          <div class="legend">
            <div class="lg">
              <b class="lt"><span v-fit="70">PCI LEGEND:</span></b>
              <div class="ls">
                <div v-for="l in legend" :key="l.r"><i :style="{ background: l.c }" /><b v-fit="l.rw">{{ l.r }}</b><span v-fit="l.nw">{{ l.n }}</span></div>
              </div>
            </div>
            <div class="btns"><b class="k"><span v-fit="58">Map Labels</span></b><b><span v-fit="36">Photos</span></b><b><span v-fit="41">Distress</span></b></div>
          </div>
        </div>
      </div>
    </section>

    <svg class="specks" width="2534" height="1552" viewBox="0 0 2534 1552" shape-rendering="crispEdges">
      <path :d="specks[0]" fill="#fff" /><path :d="specks[1]" fill="#6a6a6a" /><path :d="specks[2]" fill="#202020" />
    </svg>
  </div>
</template>

<style>
body { background: #000; }
</style>

<style scoped>
.stage { position: relative; width: 2534px; height: 1552px; background: #000; overflow: hidden; font-family: Roboto, "Liberation Sans", sans-serif; color: #1a1e28; }
.stage * { box-sizing: border-box; }
.stage span, .stage b { white-space: nowrap; }
svg { display: block; flex: none; }
h2, h3, p { margin: 0; }
.streak { position: absolute; left: 1498px; top: 127px; width: 1036px; height: 353px; background: #808080; }
.rules { position: absolute; right: 0; display: flex; flex-direction: column; }
.rules i { height: 1px; background: #fff; }
.top { top: 103px; left: 1490px; }
.top i:nth-child(2) { margin-top: 1px; }
.top i:nth-child(3) { margin: 13px 0 4px 7px; }
.top i:nth-child(4) { margin-left: 7px; }
.low { top: 480px; left: 1497px; }
.low i:nth-child(2) { height: 3px; margin-top: 2px; }
.low i:nth-child(3) { margin: 2px 0 6px; }
.rules.mid { top: 498px; left: 2447px; }
.rules.mid i:nth-child(-n+2) { height: 2px; }
.rules.mid i:nth-child(2) { margin: 5px 0 2px; }
.foot { top: 1349px; left: 2448px; }
.foot i { margin-bottom: 4px; }
.specks { position: absolute; left: 0; top: 0; }

.old { position: absolute; left: 142px; top: 116px; width: 1342px; height: 846px; background: #fff; padding: 23px 26px 0 30px; overflow: hidden; font-family: "Open Sans", "Noto Sans", sans-serif; font-weight: 700; color: #1b1b1b; }
.app { width: 1286px; }
.bar { height: 59px; background: #585858; border: 2px solid #26282c; border-bottom: 0; display: flex; color: #fff; padding-left: 19px; }
.home { width: 30px; height: 24px; margin-top: 17px; }
.brand { width: 419px; margin-left: 16px; font-size: 18px; line-height: 56px; }
nav { display: flex; font-size: 14.5px; line-height: 30px; padding-top: 21px; }
.item { height: 36px; }
.item.on { width: 102px; border-bottom: 6px solid #8fd14f; }
.field { height: 53px; background: #8fd14f; display: flex; align-items: center; padding: 0 9px 0 22px; }
.funnel { width: 27px; height: 25px; }
.fname { width: 191px; margin: 0 0 2px 10px; font-size: 18px; }
.close { margin-left: auto; width: 119px; height: 33px; border: 1px solid #2fa06a; border-radius: 3px; background: #00875f; color: #fff; font: 11px "Liberation Sans", sans-serif; padding: 0 2px 2px 0; }
.heads { height: 50px; display: flex; font-size: 17.5px; line-height: 48px; border-top: 1px solid #83966d; border-bottom: 1px solid #ccc; }
.h1 { width: 596px; background: #b0b0b0; padding-left: 28px; border-left: 1px solid #777; }
.h2 { flex: 1; background: #808080; color: #fff; padding-left: 19px; border-right: 2px solid #333; }
.cols { display: flex; height: 562px; }
aside { width: 78px; }
.tab { background: #b0b0b0; border: 2px solid #808080; display: flex; flex-direction: column; align-items: center; font-size: 10.5px; line-height: 14px; }
.t1 { height: 148px; background: #fff; border-width: 0 0 0 2px; border-right: 1px solid #eee; padding-top: 43px; }
.t1 span { margin-top: 9px; }
.t2 { height: 146px; padding: 37px 0 0 1px; border-bottom-width: 1px; }
.t2 span { margin-top: 10px; }
.t3 { height: 133px; padding: 36px 0 0 1px; }
.t3 span { margin-top: 8px; }
.t4 { height: 133px; border-width: 0 0 0 2px; padding: 34px 2px 0 0; }
.t4 span:nth-of-type(1) { margin-top: 8px; }
.ln { fill: none; stroke: #111; stroke-width: 2.6; }
.cols main { width: 517px; }
.cols main h3, .title h3 { font-size: 17px; line-height: 24px; }
.cols main h3 { padding: 34px 0 0 39px; }
.spark { margin-top: 30px; }
.limits { display: flex; justify-content: space-between; padding: 13px 73px 0 62px; }
.lim { width: 62px; height: 58px; border: 2px solid #e4e4e4; display: flex; flex-direction: column; align-items: center; font-size: 14px; line-height: 14px; font-weight: 400; padding-top: 19px; }
.lim b { line-height: 10px; font-size: 14.5px; }
.sum { flex: 1; background: #e5e5e5; border-left: 2px solid #808080; border-right: 2px solid #333; padding: 35px 14px 0 21px; }
.tabs { display: flex; height: 34px; font-size: 11px; line-height: 29px; }
.a { width: 184px; background: #fff; border-top: 4px solid #8fd14f; text-align: center; }
.b { padding: 4px 0 0 14px; }
.sheet { background: #fff; height: 493px; padding: 34px 27px 0 33px; }
.title { display: flex; justify-content: space-between; height: 57px; }
.title svg { margin-top: 2px; }
.title h3 { line-height: 24px; }
.row { margin: 0 -1px 8px 2px; height: 29px; background: #f7f7f7; display: flex; justify-content: space-between; align-items: center; padding: 0 27px 0 12px; font-size: 11.5px; color: #555; }
.row.second { padding-top: 3px; }
.old footer { height: 60px; background: #808080; border: 2px solid #ddd; }

.new { position: absolute; left: 812px; top: 510px; width: 1626px; height: 830px; border-radius: 0 0 6px 6px; box-shadow: 0 2px 18px rgba(0, 0, 0, .5); overflow: hidden; background: #fff; }
.cap { height: 47px; background: #1f2530; border-top: 1px solid #444c50; }
.airport { height: 45px; background: #7fd155; display: flex; align-items: center; padding-left: 13px; }
.select { width: 652px; height: 28px; margin-left: 4px; background: #63ad3e; display: flex; justify-content: space-between; align-items: center; padding: 0 15px 0 6px; font-size: 17.5px; font-weight: 500; }
.select span { padding-top: 1px; }
.active { height: 35px; background: #b5e89e; display: flex; align-items: center; padding-left: 13px; font-size: 12px; font-weight: 500; position: relative; z-index: 2; box-shadow: 0 7px 10px -4px rgba(0, 0, 0, .5); }
.lbl { width: 90px; padding-top: 1px; }
.badge { width: 19px; height: 19px; border-radius: 50%; background: #1f2530; color: #fff; text-align: center; line-height: 19px; font-size: 12px; }
.msg { margin-left: 14px; padding-top: 1px; font-weight: 700; font-size: 12.5px; }
.body { display: flex; height: 703px; }
.side { width: 82px; background: #1f2530; display: flex; flex-direction: column; color: #b9bcc9; font-size: 12px; }
.hide { height: 35px; background: #353c4e; border-right: 1px solid #8b90a0; color: #fff; display: flex; align-items: center; padding-left: 17px; gap: 3px; }
.hide span { padding-top: 1px; }
.s { display: flex; flex-direction: column; align-items: center; line-height: 13.8px; padding-right: 2px; }
.s1 { height: 98px; background: #353c4e; border-top: 8px solid #7fd155; color: #7fd155; padding-top: 17px; }
.s1 span { margin-top: 11px; }
.s2 { padding-top: 21px; height: 143px; }
.s2 span:nth-of-type(1) { margin-top: 8px; }
.s3 { height: 100px; }
.s3 span { margin-top: 7px; }
.s4 span { margin-top: 9px; }
.leave { margin: auto 9px 5px 6px; height: 74px; background: #7fd155; color: #1f2530; font-weight: 700; display: flex; flex-direction: column; align-items: center; padding-top: 9px; line-height: 13.3px; }
.leave span:nth-of-type(1) { margin-top: 4px; }
.def { width: 730px; }
.dhead { height: 35px; background: #353c4e; border-bottom: 1px solid #9a9db0; color: #fff; display: flex; justify-content: space-between; align-items: center; padding: 2px 7px 0 8px; font-size: 14px; }
.dhead b { font-weight: 500; }
.clear { font-size: 12px; text-decoration: underline; }
.pane { padding: 16px 14px 0 14px; }
.pane h2 { font-size: 18px; line-height: 26px; font-weight: 700; }
.pane h2 span { font-weight: 500; }
.pane p { font-size: 12.5px; line-height: 18px; margin-top: 10px; }
.card { margin-top: 7px; height: 539px; border: 2px solid #ebebeb; padding: 23px 26px 0; }
.chart { display: flex; height: 374px; }
.ylab { width: 34px; display: flex; flex-direction: column; align-items: flex-start; justify-content: space-between; font-size: 12px; line-height: 12px; margin: -5px 0 -6px; }
.vert { writing-mode: vertical-rl; transform: rotate(180deg); font-weight: 700; line-height: 14px; font-size: 12px; margin-left: -2px; }
.plot { position: relative; width: 613px; background: #bbe6a5; border-left: 1px solid #8a8f85; border-bottom: 2px solid #7f8a7a; display: flex; align-items: flex-end; gap: 2px; }
.plot i { flex: 1; background: #808080; }
.dot { position: absolute; width: 15px; height: 15px; border-radius: 50%; background: #1a1e28; bottom: -9px; }
.dot.l { left: -7px; }
.dot.r { right: -7px; }
.xlab { display: flex; justify-content: space-between; padding: 14px 0 0 27px; margin-right: -9px; font-size: 12px; line-height: 14px; }
.xlab b:first-child, .xlab b:last-child { width: 22px; }
.boxes { display: flex; gap: 18px; margin: 21px 0 0 188px; font-size: 12.5px; }
.boxes div { width: 143px; height: 53px; border: 1px solid #353c4e; border-bottom: 2px solid #8b8b93; display: flex; flex-direction: column; align-items: center; font-weight: 500; line-height: 26px; background: linear-gradient(#353c4e 25px, #fff 25px); }
.boxes b { color: #fff; font-size: 11.5px; }
.right { width: 814px; background: #e9e9eb; display: flex; flex-direction: column; border-left: 1px solid #1a1e28; }
.view { height: 35px; background: #1a1e28; color: #b9bcc9; display: flex; justify-content: flex-end; align-items: center; padding-right: 13px; font-size: 12px; font-weight: 500; box-shadow: 0 2px 9px rgba(0, 0, 0, .6); }
.view > span { padding-top: 1px; }
.seg { display: flex; margin-left: 10px; border: 1px solid #353c4e; height: 21px; line-height: 20px; font-weight: 500; }
.seg b { width: 49.5px; text-align: center; }
.seg .on { width: 50.5px; background: #353c4e; color: #7fd155; }
.tools { height: 47px; display: flex; align-items: center; padding: 0 8px 3px 9px; font-size: 12px; }
.dd { height: 24px; background: #fff; box-shadow: 0 1px 4px rgba(0, 0, 0, .5); display: flex; align-items: center; font-weight: 700; color: #353c4e; }
.dd b { color: #1a1e28; margin-left: 9px; }
.dd i { border: 4.5px solid transparent; border-top-color: #7fd155; border-bottom: 0; margin-left: auto; }
.w1 { width: 129px; padding: 0 10px 0 7px; }
.w2 { width: 188px; margin-left: auto; padding: 0 9px 0 7px; }
.w3 { width: 130px; margin-left: 18px; padding: 0 10px 0 7px; background: #1f2530; color: #b9bcc9; }
.w3 b { color: #7fd155; }
.w3 i { border-top: 0; border-bottom: 4.5px solid #7fd155; }
.mapbox { position: relative; height: 550px; border: 6px solid #1a1e28; border-width: 6px 4px 6px 5px; }
.mlabel { position: absolute; left: 0; top: 0; width: 142px; height: 25px; background: #1a1e28; color: #fff; font-size: 13px; font-weight: 700; line-height: 21px; padding-left: 6px; }
.time { position: absolute; right: 9px; top: 8px; width: 94px; height: 138px; background: #fff; box-shadow: 0 1px 4px rgba(0, 0, 0, .45); font-size: 11.5px; padding: 10px 9px; line-height: 16px; }
.r1 { display: flex; gap: 7px; align-items: center; }
.r2 { display: block; margin-top: 15px; }
.steps { display: flex; margin: 13px 0 0 8px; gap: 5px; }
.steps b { display: block; line-height: 34px; margin-top: -13px; margin-bottom: 13px; }
.toolbar { position: absolute; right: 5px; top: 478px; width: 337px; height: 37px; background: #fff; box-shadow: 0 1px 4px rgba(0, 0, 0, .35); }
.scale { position: absolute; right: 0; bottom: 0; width: 88px; height: 17px; background: #454650; border: 1px solid #999; border-top-color: #33343c; color: #fff; font-size: 11.5px; text-align: center; line-height: 15px; }
.st text { font: 500 18px Roboto, sans-serif; stroke: #eeede9; stroke-width: 3; paint-order: stroke; }
.st.mid text { text-anchor: middle; font-size: 17px; }
.st.mid text[font-style] { font-style: italic; font-size: 20px; stroke: none; }
.sh text { font: 700 15px Roboto, sans-serif; text-anchor: middle; fill: #777; }
.sec text { font: 700 33px Roboto, sans-serif; fill: #fff; stroke: #111; stroke-width: 6; stroke-linejoin: round; paint-order: stroke; }
.logo text { font: 500 37px Roboto, sans-serif; fill: #fff; stroke: #666; stroke-width: 4; paint-order: stroke; }
.attr text { font-family: Roboto, sans-serif; font-size: 27px; fill: #1626e8; }
.legend { flex: 1; display: flex; justify-content: space-between; padding: 0 13px 0 9px; }
.lt { display: block; font-size: 12px; line-height: 14px; padding-top: 8px; }
.ls { display: flex; gap: 5px; margin-top: 2px; }
.ls div { width: 80px; display: flex; flex-direction: column; align-items: center; font-size: 12px; line-height: 15px; }
.ls i { width: 80px; height: 10px; border: 1px solid #bcbcbf; margin-bottom: 2px; }
.btns { display: flex; padding-top: 9px; font-size: 12px; gap: 4px; }
.btns b { background: #fff; height: 29px; line-height: 26px; width: 50px; text-align: center; box-shadow: 0 1px 4px rgba(0, 0, 0, .5); }
.btns b:last-child { width: 55px; }
.btns .k { width: 71px; background: #1a1e28; color: #7fd155; }
</style>
